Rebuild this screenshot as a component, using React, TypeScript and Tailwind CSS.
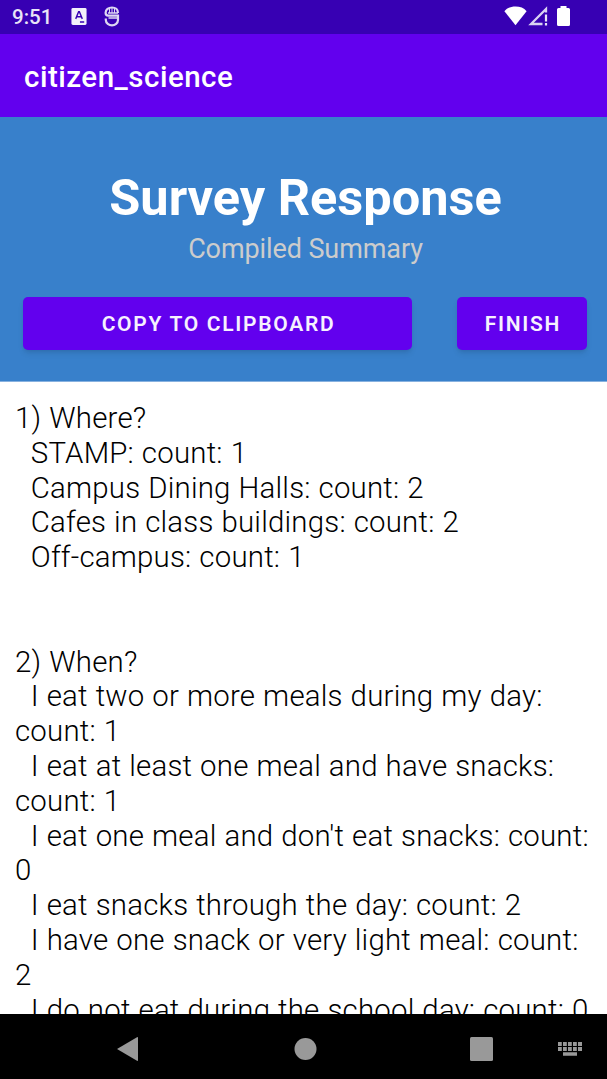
import React, { FC } from "react";

type Option = {
  label: string;
  count: number;
};

type Question = {
  title: string;
  options: Option[];
};

const questions: Question[] = [
  {
    title: "1) Where?",
    options: [
      { label: "STAMP", count: 1 },
      { label: "Campus Dining Halls", count: 2 },
      { label: "Cafes in class buildings", count: 2 },
      { label: "Off-campus", count: 1 },
    ],
  },
  {
    title: "2) When?",
    options: [
      { label: "I eat two or more meals during my day", count: 1 },
      { label: "I eat at least one meal and have snacks", count: 1 },
      { label: "I eat one meal and don't eat snacks", count: 0 },
      { label: "I eat snacks through the day", count: 2 },
      { label: "I have one snack or very light meal", count: 2 },
      { label: "I do not eat during the school day", count: 0 },
    ],
  },
];

const StatusBar: FC = () => {
  return (
    <div className="flex h-[34px] shrink-0 items-center bg-[#3700b3] pb-0.5 pl-3 text-white">
      <span className="w-[59px] pt-0.5 text-[20.5px] leading-[34px] font-medium text-[#e9e4f7]">9:51</span>
      <svg className="h-[17px] w-4" viewBox="0 0 16 18">
        <rect width="16" height="18" rx="1.5" fill="#f3f0fb" />
        <path d="M4.5 11.5 7.6 4h.8l3.1 7.5M5.7 9.3h4.6M9 14.8h4.5" fill="none" stroke="#3700b3" strokeWidth="1.5" />
      </svg>
      <svg className="ml-[17px] h-[21px] w-4" viewBox="0 0 16 21" fill="none" stroke="#ded7f3">
        <path d="M14 7C14 3.5 11.5 1.5 8 1.5S1.6 3.6 1.6 6.8c0 1.9.9 2.9 2.6 2.9h9.8v4.4c0 3.1-3 5.2-6 5.2s-6.2-2.1-6.2-5.2v-1.6" strokeWidth="2.2" />
        <path d="M4 7h10M4.5 12h9" strokeWidth="1.3" />
        <path d="M5.5 2v5M8 1v6M10.5 2v5" strokeWidth="1" />
      </svg>
      <svg className="ml-[384px] h-5 w-[23px]" viewBox="0 0 23 20" fill="#fff">
        <path d="M.4 5.2C3 1.8 7 .4 11.5.4S20 1.8 22.6 5.2L11.5 19.3Z" />
      </svg>
      <svg className="ml-px h-5 w-5" viewBox="0 0 20 20" fill="none">
        <path d="M14.5 18H3L18 3V6.5" stroke="#d9d1f2" strokeWidth="2.3" />
        <path d="M18 8.5v7M18 17v2.5" stroke="#e9e4f7" strokeWidth="2.2" />
      </svg>
      <svg className="ml-[9px] h-5 w-[13px]" viewBox="0 0 13 20" fill="#fff">
        <path d="M3.5 0h6v2H11.5q1.5 0 1.5 1.5v15Q13 20 11.5 20h-10Q0 20 0 18.5v-15Q0 2 1.5 2h2Z" />
      </svg>
    </div>
  );
};

const NavigationBar: FC = () => {
  return (
    <div className="flex h-[65px] shrink-0 items-center bg-black pt-1 text-[#999999]">
      <svg className="ml-[117px] h-6 w-[21px]" viewBox="0 0 21 26" preserveAspectRatio="none" fill="currentColor">
        <path d="M0 13 20 .2q1-.5 1 .6v24.4q0 1.1-1 .6Z" />
      </svg>
      <svg className="ml-[156px] h-[22px] w-[23px]" viewBox="0 0 23 22" fill="currentColor">
        <circle cx="11.5" cy="11" r="11" />
      </svg>
      <svg className="ml-[153px] h-6 w-[23px]" viewBox="0 0 23 24" fill="currentColor">
        <rect width="23" height="24" rx="1.5" />
      </svg>
      <svg className="ml-[65px] h-[14px] w-6" viewBox="0 0 24 14" fill="currentColor">
        <path d="M0 0h3.8v4H0zM5 0h3.8v4H5zM10 0h3.8v4H10zM15 0h3.8v4H15zM20 0h4v4h-4zM0 5h3.8v4H0zM5 5h3.8v4H5zM10 5h3.8v4H10zM15 5h3.8v4H15zM20 5h4v4h-4zM5 10.3h14v3.5H5z" />
      </svg>
    </div>
  );
};

// 質問ごとの集計結果
const QuestionSummary: FC<Question> = (props: Question) => {
  const { title, options } = props;

  return (
    <div className="mb-[69.6px] whitespace-pre-wrap">
      <p>{title}</p>
      {options.map((option) => (
        <p key={option.label}>{`  ${option.label}: count: ${option.count}`}</p>
      ))}
    </div>
  );
};

const App: FC = () => {
  return (
    <div className="flex h-[1079px] w-[607px] flex-col overflow-hidden bg-white font-['Roboto',sans-serif]">
      <StatusBar />
      <div className="flex h-[83px] shrink-0 items-center bg-[#6200ee] pt-1 pl-6">
        <h1 className="text-[29.5px] font-medium tracking-[0.5px] text-white">citizen_science</h1>
      </div>
      <div className="flex h-[265px] shrink-0 flex-col items-center border-b border-[#87b1df] bg-[#3880cb] pt-[51px]">
        <h2 className="pl-1 text-[50.5px] leading-[60px] font-bold text-white">Survey Response</h2>
        <p className="mt-[5px] pl-1 text-[27px] leading-8 tracking-[-0.1px] text-[#cccccc]">Compiled Summary</p>
        <div className="mt-[32px] flex w-full gap-[45px] pr-5 pl-[23px]">
          <button className="h-[53px] flex-1 rounded-[5px] bg-[#6200ee] pt-0.5 pl-0.5 text-[21px] font-semibold tracking-[1.7px] text-[#f6f1fe] shadow-md">
            COPY TO CLIPBOARD
          </button>
          <button className="h-[53px] w-[130px] rounded-[5px] bg-[#6200ee] pt-0.5 pl-0.5 text-[21px] font-semibold tracking-[1.7px] text-[#f6f1fe] shadow-md">
            FINISH
          </button>
        </div>
      </div>
      <div className="min-h-0 flex-1 overflow-hidden pt-[19px] pr-[10px] pl-[15px] text-[29.4px] leading-[34.8px] font-light tracking-[0.22px] text-black [word-spacing:0.5px]">
        {questions.map((question) => (
          <QuestionSummary key={question.title} {...question} />
        ))}
      </div>
      <NavigationBar />
    </div>
  );
};

export default App;
